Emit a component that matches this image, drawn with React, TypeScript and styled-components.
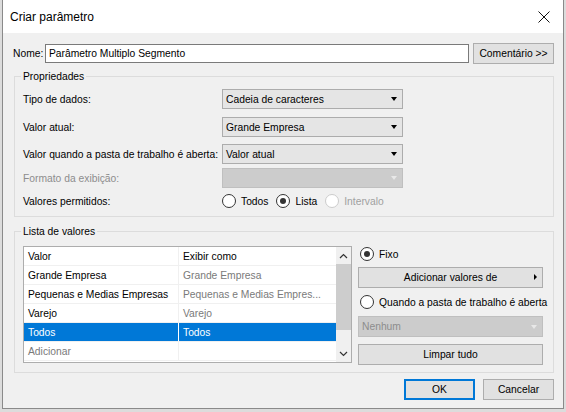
import styled, { createGlobalStyle } from 'styled-components'

const GlobalStyle = createGlobalStyle`
    html, body {
        margin: 0;
        padding: 0;
        background: #dcdcdc;
    }
    body {
        font-family: "Liberation Sans", Arial, sans-serif;
        font-size: 10.3px;
        color: #000;
    }
`

const Window = styled.div`
    margin-left: 2px;
    width: 560px;
    height: 408px;
    background: #f0f0f0;
    border: 1px solid #8a8a8a;
    border-top: none;
    display: flex;
    flex-direction: column;
`

const TitleBar = styled.div`
    height: 33px;
    background: #ffffff;
    display: flex;
    align-items: center;
    justify-content: space-between;
    padding: 0 10px 0 7px;
    flex-shrink: 0;
`

const Title = styled.span`
    font-size: 12px;
    color: #000;
`

const CloseIcon = styled.svg`
    width: 12px;
    height: 12px;
    margin-right: 3px;
`

const Body = styled.div`
    display: flex;
    flex-direction: column;
    padding: 10px 9px 0 10px;
`

const NameRow = styled.div`
    display: flex;
    align-items: center;
    height: 20px;
`

const NameLabel = styled.span`
    width: 32px;
`

const TextInput = styled.div`
    width: 420px;
    height: 17px;
    border: 1px solid #7a7a7a;
    background: #fff;
    display: flex;
    align-items: center;
    padding-left: 3px;
    box-sizing: content-box;
    margin-right: 4px;
`

const Button = styled.div<{ $primary?: boolean; $w?: number }>`
    height: 19px;
    width: ${p => (p.$w ? `${p.$w}px` : 'auto')};
    border: 1px solid ${p => (p.$primary ? '#0078d7' : '#adadad')};
    box-shadow: ${p => (p.$primary ? 'inset 0 0 0 1px #0078d7' : 'none')};
    background: #e1e1e1;
    display: flex;
    align-items: center;
    justify-content: center;
    position: relative;
    flex-shrink: 0;
`

const ButtonArrow = styled.span`
    position: absolute;
    right: 5px;
    top: 6px;
    width: 0;
    height: 0;
    border-top: 3px solid transparent;
    border-bottom: 3px solid transparent;
    border-left: 3px solid #000;
`

const GroupBox = styled.div<{ $h: number; $mt: number }>`
    margin-top: ${p => p.$mt}px;
    margin-left: 1px;
    width: 538px;
    height: ${p => p.$h}px;
    border: 1px solid #dcdcdc;
    display: flex;
    flex-direction: column;
`

const Legend = styled.span`
    align-self: flex-start;
    margin: -7px 0 0 6px;
    padding: 0 2px;
    line-height: 13px;
    background: #f0f0f0;
`

const PropGrid = styled.div`
    display: grid;
    grid-template-columns: 199px 181px;
    grid-template-rows: 28px 27px 24px 23px 20px;
    align-items: start;
    margin: 6px 0 0 8px;
`

const RowLabel = styled.span<{ $disabled?: boolean }>`
    height: 20px;
    display: flex;
    align-items: center;
    color: ${p => (p.$disabled ? '#8d8d8d' : '#000')};
    white-space: nowrap;
`

const Combo = styled.div<{ $disabled?: boolean; $h?: number }>`
    height: ${p => p.$h ?? 18}px;
    border: 1px solid ${p => (p.$disabled ? '#bfbfbf' : '#acacac')};
    background: ${p => (p.$disabled ? '#cccccc' : '#e5e5e5')};
    color: ${p => (p.$disabled ? '#8d8d8d' : '#000')};
    display: flex;
    align-items: center;
    justify-content: space-between;
    padding: 0 5px 0 3px;
`

const ComboArrow = styled.span<{ $disabled?: boolean }>`
    width: 0;
    height: 0;
    border-left: 3.5px solid transparent;
    border-right: 3.5px solid transparent;
    border-top: 4px solid ${p => (p.$disabled ? '#e8e8e8' : '#000')};
`

const RadioGroup = styled.div`
    display: flex;
    align-items: center;
    height: 20px;
    gap: 8px;
`

const RadioItem = styled.label<{ $disabled?: boolean }>`
    display: flex;
    align-items: center;
    gap: 5px;
    color: ${p => (p.$disabled ? '#a0a0a0' : '#000')};
    white-space: nowrap;
`

const RadioCircle = styled.span<{ $checked?: boolean; $disabled?: boolean }>`
    width: 12px;
    height: 12px;
    border-radius: 50%;
    border: 1px solid ${p => (p.$disabled ? '#cccccc' : '#333')};
    background: #fff;
    display: flex;
    align-items: center;
    justify-content: center;
    flex-shrink: 0;
    &::after {
        content: '';
        display: ${p => (p.$checked ? 'block' : 'none')};
        width: 6px;
        height: 6px;
        border-radius: 50%;
        background: #333;
    }
`

const ListArea = styled.div`
    display: flex;
    margin: 8px 0 0 8px;
    gap: 6px;
`

const Table = styled.div`
    width: 327px;
    height: 115px;
    border: 1px solid #adadad;
    background: #fff;
    display: flex;
`

const Rows = styled.div`
    flex: 1;
    display: flex;
    flex-direction: column;
`

const Row = styled.div<{ $selected?: boolean }>`
    display: grid;
    grid-template-columns: 155px 157px;
    height: 18px;
    border-bottom: 1px solid #f0f0f0;
    background: ${p => (p.$selected ? '#0078d7' : '#fff')};
    color: ${p => (p.$selected ? '#fff' : '#000')};
`

const Cell = styled.span<{ $muted?: boolean; $first?: boolean; $light?: boolean }>`
    display: flex;
    align-items: center;
    padding-left: 4px;
    border-right: ${p => (p.$first ? `1px solid ${p.$light ? '#ffffff' : '#f0f0f0'}` : 'none')};
    color: ${p => (p.$muted ? '#7a7a7a' : 'inherit')};
    white-space: nowrap;
    overflow: hidden;
`

const Scrollbar = styled.div`
    width: 16px;
    background: #f0f0f0;
    display: flex;
    flex-direction: column;
    align-items: center;
`

const ScrollBtn = styled.div`
    height: 17px;
    display: flex;
    align-items: center;
    justify-content: center;
`

const Thumb = styled.div`
    width: 15px;
    height: 66px;
    background: #cdcdcd;
`

const ScrollSpacer = styled.div`
    flex: 1;
`

const SidePanel = styled.div`
    width: 185px;
    display: flex;
    flex-direction: column;
`

const SideRadio = styled(RadioItem)<{ $gap?: number }>`
    height: 14px;
    margin: ${p => (p.$gap ? `${p.$gap}px 0 ${p.$gap}px 2px` : '1px 0 6px 2px')};
`

const Footer = styled.div`
    display: flex;
    justify-content: flex-end;
    gap: 8px;
    margin-top: 6px;
`

export default function App() {
    const rows = [
        { valor: 'Grande Empresa', exibir: 'Grande Empresa' },
        { valor: 'Pequenas e Medias Empresas', exibir: 'Pequenas e Medias Empres...' },
        { valor: 'Varejo', exibir: 'Varejo' },
    ]

    return (
        <>
            <GlobalStyle />
            <Window>
                <TitleBar>
                    <Title>Criar parâmetro</Title>
                    <CloseIcon viewBox="0 0 12 12">
                        <path d="M0.5 0.5 L11.5 11.5 M11.5 0.5 L0.5 11.5" stroke="#111" strokeWidth="1" fill="none" />
                    </CloseIcon>
                </TitleBar>
                <Body>
                    <NameRow>
                        <NameLabel>Nome:</NameLabel>
                        <TextInput>Parâmetro Multiplo Segmento</TextInput>
                        <Button $w={79}>Comentário &gt;&gt;</Button>
                    </NameRow>

                    <GroupBox $mt={13} $h={139}>
                        <Legend>Propriedades</Legend>
                        <PropGrid>
                            <RowLabel>Tipo de dados:</RowLabel>
                            <Combo>Cadeia de caracteres<ComboArrow /></Combo>
                            <RowLabel>Valor atual:</RowLabel>
                            <Combo>Grande Empresa<ComboArrow /></Combo>
                            <RowLabel>Valor quando a pasta de trabalho é aberta:</RowLabel>
                            <Combo>Valor atual<ComboArrow /></Combo>
                            <RowLabel $disabled>Formato da exibição:</RowLabel>
                            <Combo $disabled><span /><ComboArrow $disabled /></Combo>
                            <RowLabel>Valores permitidos:</RowLabel>
                            <RadioGroup>
                                <RadioItem><RadioCircle />Todos</RadioItem>
                                <RadioItem><RadioCircle $checked />Lista</RadioItem>
                                <RadioItem $disabled><RadioCircle $disabled />Intervalo</RadioItem>
                            </RadioGroup>
                        </PropGrid>
                    </GroupBox>

                    <GroupBox $mt={14} $h={140}>
                        <Legend>Lista de valores</Legend>
                        <ListArea>
                            <Table>
                                <Rows>
                                    <Row>
                                        <Cell $first>Valor</Cell>
                                        <Cell>Exibir como</Cell>
                                    </Row>
                                    {rows.map(r => (
                                        <Row key={r.valor}>
                                            <Cell $first>{r.valor}</Cell>
                                            <Cell $muted>{r.exibir}</Cell>
                                        </Row>
                                    ))}
                                    <Row $selected>
                                        <Cell $first $light>Todos</Cell>
                                        <Cell>Todos</Cell>
                                    </Row>
                                    <Row>
                                        <Cell $first $muted>Adicionar</Cell>
                                        <Cell />
                                    </Row>
                                </Rows>
                                <Scrollbar>
                                    <ScrollBtn>
                                        <svg width="9" height="6" viewBox="0 0 9 6">
                                            <path d="M1 5 L4.5 1.5 L8 5" stroke="#333" strokeWidth="1.2" fill="none" />
                                        </svg>
                                    </ScrollBtn>
                                    <Thumb />
                                    <ScrollSpacer />
                                    <ScrollBtn>
                                        <svg width="9" height="6" viewBox="0 0 9 6">
                                            <path d="M1 1 L4.5 4.5 L8 1" stroke="#333" strokeWidth="1.2" fill="none" />
                                        </svg>
                                    </ScrollBtn>
                                </Scrollbar>
                            </Table>
                            <SidePanel>
                                <SideRadio><RadioCircle $checked />Fixo</SideRadio>
                                <Button>Adicionar valores de<ButtonArrow /></Button>
                                <SideRadio $gap={7}>
                                    <RadioCircle />Quando a pasta de trabalho é aberta
                                </SideRadio>
                                <Combo $disabled $h={19}>Nenhum<ComboArrow $disabled /></Combo>
                                <Button style={{ marginTop: 7 }}>Limpar tudo</Button>
                            </SidePanel>
                        </ListArea>
                    </GroupBox>

                    <Footer>
                        <Button $primary $w={69}>OK</Button>
                        <Button $w={69}>Cancelar</Button>
                    </Footer>
                </Body>
            </Window>
        </>
    )
}
